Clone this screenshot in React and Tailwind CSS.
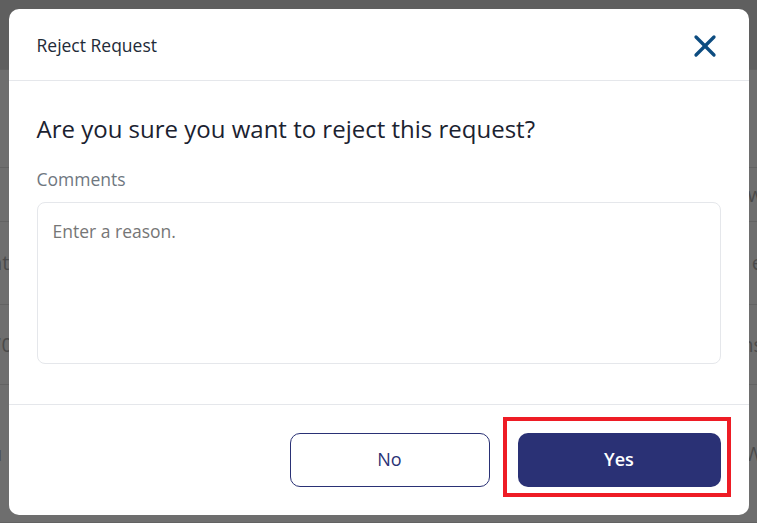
import { X } from 'lucide-react'

const rows = [
  { h: 'h-[70px]', bg: 'bg-[#5f5f5f]', left: '', right: '' },
  { h: 'h-[98px]', bg: 'bg-[#6e6e6e]', left: '', right: '' },
  { h: 'h-[54px]', bg: 'bg-[#6e6e6e]', left: '', right: 'ew' },
  { h: 'h-[83px]', bg: 'bg-[#6e6e6e]', left: 'nt', right: 'e' },
  { h: 'h-[80px]', bg: 'bg-[#6e6e6e]', left: '70', right: 'ns' },
  { h: 'h-[138px]', bg: 'bg-[#6e6e6e]', left: 'u', right: 'W' },
]

function Backdrop() {
  return (
    <div className="absolute inset-0 flex flex-col">
      {rows.map((r, i) => (
        <div
          key={i}
          className={`${r.h} ${r.bg} border-b border-[#626262] flex items-center justify-between text-[20px] text-[#4a4a4a]`}
        >
          <span className="-ml-[10px]">{r.left}</span>
          <span className="-mr-[6px]">{r.right}</span>
        </div>
      ))}
    </div>
  )
}

export default function App() {
  return (
    <div
      className="relative w-[757px] h-[523px] overflow-hidden bg-[#6e6e6e]"
      style={{ fontFamily: '"Open Sans", "Noto Sans", sans-serif' }}
    >
      <Backdrop />

      <div className="absolute inset-0 flex items-center justify-center">
        <div className="w-[740px] h-[506px] bg-white rounded-[10px] flex flex-col">
          {/* Header */}
          <div className="h-[72px] flex items-center justify-between pl-[28px] pr-[26px] pt-[3px] border-b border-[#e5e7eb]">
            <h2 className="text-[17.5px] text-[#222b38]">Reject Request</h2>
            <button className="text-[#0d4c80]">
              <X className="w-[36px] h-[36px]" strokeWidth={2.2} />
            </button>
          </div>

          {/* Body */}
          <div className="flex-1 px-[28px] pt-[32px] border-b border-[#e5e7eb]">
            <p className="text-[24px] text-[#1b2230] leading-[32px]">
              Are you sure you want to reject this request?
            </p>
            <label className="block mt-[22px] text-[17.5px] text-[#6f777f] leading-[24px]">
              Comments
            </label>
            <textarea
              placeholder="Enter a reason."
              className="mt-[11px] w-full h-[162px] resize-none rounded-[8px] border border-[#e5e7eb] px-[15px] py-[15px] text-[17.5px] text-[#333] placeholder:text-[#767676] outline-none"
            />
          </div>

          {/* Footer */}
          <div className="h-[110px] flex items-center justify-end gap-[28px] pr-[28px]">
            <button className="w-[200px] h-[54px] rounded-[10px] border border-[#2a3175] text-[18px] text-[#2a3175]">
              No
            </button>
            <div className="relative">
              <button className="w-[203px] h-[54px] rounded-[10px] bg-[#2a3175] text-[18px] font-semibold text-white">
                Yes
              </button>
              <div className="absolute -left-[15px] -right-[10px] -top-[16px] -bottom-[10px] border-[4px] border-[#ee1c25] pointer-events-none" />
            </div>
          </div>
        </div>
      </div>
    </div>
  )
}
